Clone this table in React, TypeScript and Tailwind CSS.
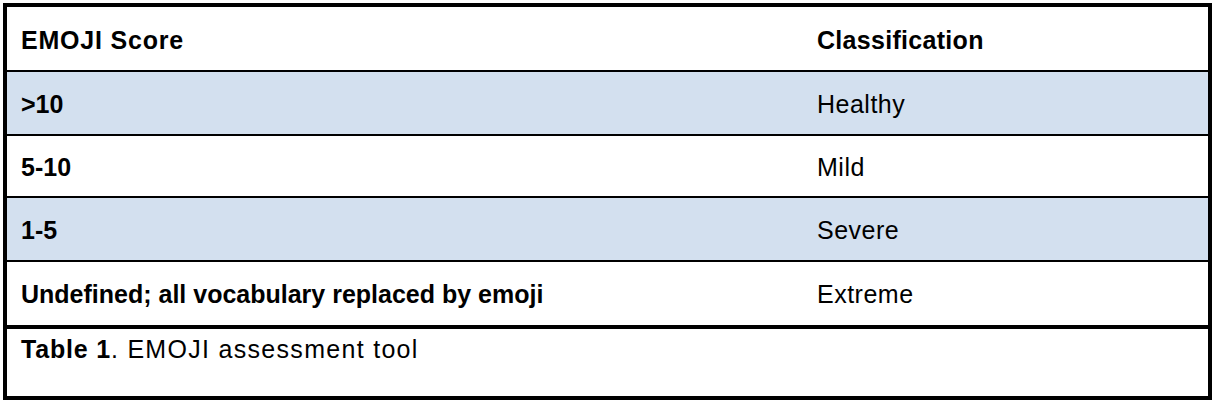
const rows = [
  { score: ">10", label: "Healthy", shaded: true, h: "h-[64px]" },
  { score: "5-10", label: "Mild", shaded: false, h: "h-[62px]" },
  { score: "1-5", label: "Severe", shaded: true, h: "h-[64px]" },
  { score: "Undefined; all vocabulary replaced by emoji", label: "Extreme", shaded: false, h: "h-[65px]" },
];

function Row({ score, label, shaded, h }: { score: string; label: string; shaded: boolean; h: string }) {
  return (
    <div className={`grid grid-cols-[796px_1fr] items-center border-t-2 border-black ${h} ${shaded ? "bg-[#d3e0ef]" : "bg-white"}`}>
      <div className="px-[14px] pt-[2px] font-bold">{score}</div>
      <div className="px-[14px] pt-[2px] tracking-[0.5px]">{label}</div>
    </div>
  );
}

export default function App() {
  return (
    <div className="w-[1218px] h-[406px] bg-white p-[3px] font-['Liberation_Sans',Arial,sans-serif] text-[25px] leading-[29px] text-black">
      <div className="w-[1209px] border-4 border-black">
        <div className="grid grid-cols-[796px_1fr] items-center h-[63px] font-bold">
          <div className="px-[14px] pt-[4px] tracking-[0.8px]">EMOJI Score</div>
          <div className="px-[14px] pt-[4px] tracking-[0.3px]">Classification</div>
        </div>
        {rows.map((r) => (
          <Row key={r.score} {...r} />
        ))}
        <div className="border-t-4 border-black h-[71px] px-[14px] pt-[6px]">
          <span className="font-bold tracking-[0.8px]">Table 1</span>
          <span className="tracking-[1.3px]">. EMOJI assessment tool</span>
        </div>
      </div>
    </div>
  );
}
